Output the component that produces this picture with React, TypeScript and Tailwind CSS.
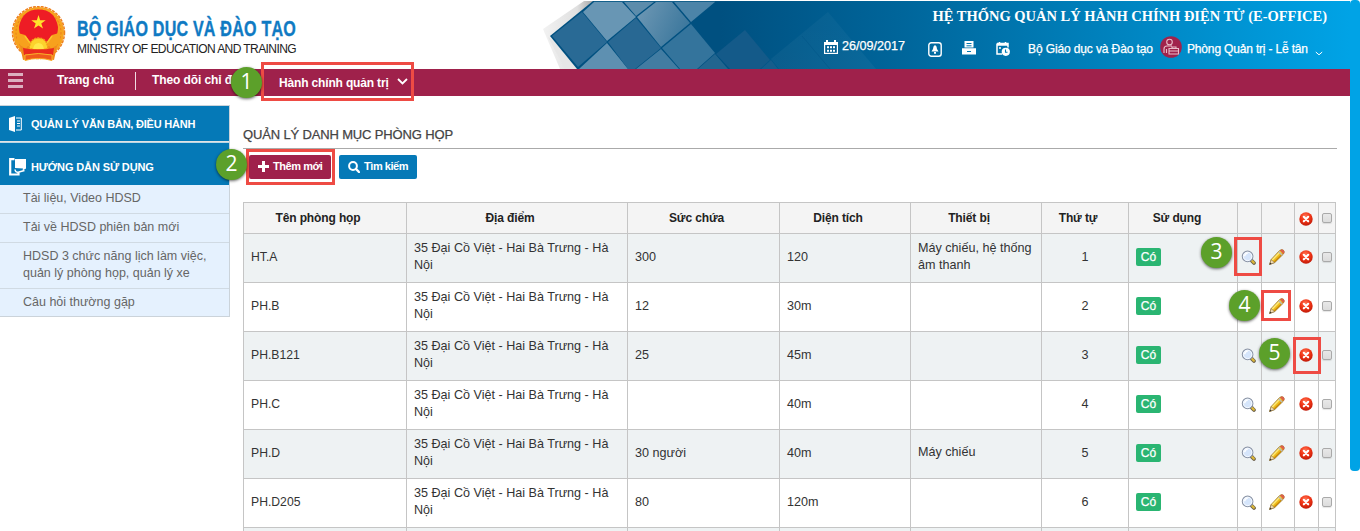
import React from "react";

const rows = [
  { name: "HT.A", cap: "300", area: "120", dev: "Máy chiếu, hệ thống âm thanh" },
  { name: "PH.B", cap: "12", area: "30m", dev: "" },
  { name: "PH.B121", cap: "25", area: "45m", dev: "" },
  { name: "PH.C", cap: "", area: "40m", dev: "" },
  { name: "PH.D", cap: "30 người", area: "40m", dev: "Máy chiếu" },
  { name: "PH.D205", cap: "80", area: "120m", dev: "" },
];

const gridCols = "grid grid-cols-[163px_221px_152px_131px_131px_87px_109px_24px_33px_24px_17px]";
const cell = "flex items-center border-r border-b border-[#c5c5c5]";

function Emblem() {
  return (
    <svg className="mt-[6px] h-[56px] w-[57px] shrink-0" viewBox="0 0 57 56">
      <circle cx="28.5" cy="26.500" r="25.500" fill="#f7a41d" />
      <circle cx="28.5" cy="26.500" r="26" fill="none" stroke="#ee7f1c" strokeWidth="1.500" strokeDasharray="3 1" />
      <circle cx="28.5" cy="26.500" r="22.500" fill="none" stroke="#ee7a1c" strokeWidth="1" strokeDasharray="2 2" />
      <path d="M10 40 L13 54 Q28 50 44 54 L47 40 Z" fill="#f08a1c" />
      <path d="M9 21 Q12 3.500 28.500 3.500 Q45 3.500 48 21 Q48 30 43 37 H14 Q9 30 9 21Z" fill="#ee1c25" />
      <path d="M28.5 9 l1.7 5.2h5.5l-4.4 3.2 1.7 5.2-4.5-3.2-4.5 3.2 1.7-5.2-4.4-3.2h5.5z" fill="#ffe32b" />
      <path d="M8 27 L15 29 L20 36 L16 43 L6 36Z M49 27 L42 29 L37 36 L41 43 L51 36Z" fill="#f7a11d" />
      <path d="M15 30 L20 37 M42 30 L37 37" stroke="#fbc62b" strokeWidth="1.500" />
      <path d="M19 43 Q20 32 28.500 32 Q37 32 38 43Z" fill="#fcd22c" stroke="#f39a1c" strokeWidth="1.500" strokeDasharray="2 1" />
      <path d="M23 43 Q24 37 28.500 37 Q33 37 34 43Z" fill="#ffe84a" />
      <path d="M13 42 Q28 45 44 42 L43 49 Q28 46 14 49Z" fill="#ea2a1f" />
      <path d="M15 49 Q28 46 42 49 V54.500 Q28 50.500 15 54.500Z" fill="#ef5a1b" stroke="#f8b02b" strokeWidth="1" />
    </svg>
  );
}

function Banner() {
  return (
    <svg className="absolute top-px left-[540px] h-[68px] w-[810px]" viewBox="540 1 810 68">
      <defs>
        <linearGradient id="base" gradientUnits="userSpaceOnUse" x1="720" y1="0" x2="1350" y2="0">
          <stop offset="0" stopColor="#005080" />
          <stop offset=".28" stopColor="#00659a" />
          <stop offset="1" stopColor="#00a3e6" />
        </linearGradient>
        <linearGradient id="shade" x1="0" y1="0" x2="1" y2="0">
          <stop offset="0" stopColor="#f2f2f2" />
          <stop offset=".6" stopColor="#e0e0e0" />
          <stop offset="1" stopColor="#8c8c8c" />
        </linearGradient>
        <linearGradient id="tile" x1="0" y1="0" x2="1" y2="0.4">
          <stop offset="0" stopColor="#7099b5" />
          <stop offset="1" stopColor="#3d789d" />
        </linearGradient>
        <linearGradient id="faint" x1="0" y1="0" x2="0" y2="1">
          <stop offset="0" stopColor="#fff" stopOpacity=".03" />
          <stop offset="1" stopColor="#fff" stopOpacity=".04" />
        </linearGradient>
      </defs>
      <path d="M543 29 L584 1 H600 L565 69 H560 Z" fill="url(#shade)" />
      <path d="M565 69 L548 37 L590 69Z" fill="#e6e6e6" />
      <path d="M550 36 L593 1 H1350 V69 H577 Z" fill="url(#base)" />
      <path d="M552 36 L582 12 L607 42 L578 67Z" fill="#296a95" />
      <path d="M583 12 L594 2 H622 L636 17 L607 41Z" fill="#6896b4" />
      <path d="M607 43 L628 69 H579Z" fill="#5e90b1" />
      <path d="M636 18 L661 48 L635 69 H628 L608 42Z" fill="#286893" />
      <path d="M624 2 H654 L636 16Z" fill="#5c8cab" />
      <path d="M656 2 H672 L690 23 L661 47 L637 17Z" fill="url(#tile)" />
      <path d="M674 2 H715 L691 22Z" fill="#4c84a8" />
      <path d="M691 24 L715 53 L697 69 H680 L662 48Z" fill="#34749c" />
      <path d="M661 49 L679 69 H636Z" fill="#427ca2" />
      <path d="M715 54 L728 69 H698Z" fill="#22658f" />
      <path d="M745 30 L770 60 L760 69 H730 L716 54Z" fill="#145a89" />
      <path d="M771 60 L778 69 H761Z" fill="#155d8c" />
      <path d="M828 12 L876 69 H779 L771 59Z" fill="url(#faint)" />
      <path d="M802 36 L830 69" stroke="#005384" strokeWidth="1" opacity=".4" />
      <path d="M594 1.5 H715" stroke="#14608b" strokeWidth="1" />
    </svg>
  );
}

function Magnifier() {
  return (
    <svg className="size-4 shrink-0" viewBox="0 0 16 16">
      <path d="M10.500 10.500 L13 13" stroke="#6b5f4a" strokeWidth="3.8" strokeLinecap="round" />
      <path d="M11.200 11 L12.800 12.600" stroke="#dcb838" strokeWidth="2.2" strokeLinecap="round" />
      <circle cx="6.6" cy="6.4" r="5.3" fill="#d5e5fb" stroke="#8b94a5" strokeWidth="1.1" />
      <circle cx="6.6" cy="6.4" r="4.200" fill="none" stroke="#f6faff" strokeWidth="1" />
      <path d="M3.7 6.200a3 3 0 0 1 3-3" stroke="#fff" strokeWidth="1.4" fill="none" />
    </svg>
  );
}

function Pencil() {
  return (
    <svg className="size-4 shrink-0" viewBox="0 0 16 16">
      <path d="M.6 15.5 L2.2 10.5 L10.7 1.5 Q12.5 0 14.4 1.2 Q15.8 2.8 14.6 4.8 L5.8 13.5Z" fill="#f0bd1d" stroke="#8b6618" strokeWidth=".8" />
      <path d="M3.2 11 L11.2 2.8" stroke="#fce97b" strokeWidth="1.5" />
      <path d="M5.3 12.9 L13.8 4.6" stroke="#c98a0b" strokeWidth="1.2" />
      <path d="M.6 15.5 L2.2 10.8 L5.5 13.5Z" fill="#f3dfb8" stroke="#8f7750" strokeWidth=".6" />
      <path d="M.5 15.6 L1.2 13.5 L2.7 14.7Z" fill="#333" />
      <path d="M10.2 2.2 L13.8 5.8 L12.8 6.7 L9.3 3.2Z" fill="#b7bbc1" />
      <path d="M11 1.5 Q13 -.2 14.8 1.4 Q16.2 3.3 14.4 5.1Z" fill="#dc604b" />
    </svg>
  );
}

function Delete() {
  return (
    <svg className="size-[14px] shrink-0" viewBox="0 0 14 14">
      <defs>
        <radialGradient id="red" cx=".45" cy=".3" r=".75">
          <stop offset="0" stopColor="#ff7656" />
          <stop offset=".5" stopColor="#f03314" />
          <stop offset="1" stopColor="#b91808" />
        </radialGradient>
      </defs>
      <circle cx="7" cy="7" r="6.7" fill="url(#red)" />
      <path d="M4.8 4.8 L9.2 9.3 M9.2 4.8 L4.8 9.3" stroke="#fff" strokeWidth="2.1" strokeLinecap="round" />
    </svg>
  );
}

function Box() {
  return <span className="block size-[10px] rounded-[2px] border border-[#a9a9a9] bg-linear-to-b from-[#e8e8e8] to-[#dcdcdc] shadow-[0_1px_1px_rgba(0,0,0,0.1)]" />;
}

function Step({ n, at }: { n: number; at: string }) {
  return (
    <div className={`absolute flex size-[31px] items-center justify-center rounded-full bg-[#5ca02a] pb-[3px] font-['Open_Sans','Noto_Sans',sans-serif] text-[21px] leading-none text-white shadow-[0_1px_3px_rgba(0,0,0,0.6)] ${at}`}>
      {n}
    </div>
  );
}

function HeaderInfo() {
  return (
    <div className="relative ml-auto h-[69px] w-[530px] text-[12px] font-normal text-white">
      <div className="flex h-[32px] items-center justify-end pt-[2px] pr-[3px] font-['Liberation_Serif',serif] text-[14.470px] font-bold whitespace-nowrap">
        HỆ THỐNG QUẢN LÝ HÀNH CHÍNH ĐIỆN TỬ (E-OFFICE)
      </div>
      <div className="flex h-[30px] items-center whitespace-nowrap [-webkit-text-stroke:0.25px_white]">
        <svg className="ml-[24px] h-[14px] w-[14px]" viewBox="0 0 14 14">
          <path d="M0 2h2V0h2v2h6V0h2v2h2v12H0z" fill="#fff" />
          <path d="M1.2 5h11.6v7.8H1.2z" fill="#005d91" />
          <path d="M3 6.3h2v2H3zM6 6.3h2v2H6zM9 6.3h2v2H9zM3 9.7h2v2H3zM6 9.7h2v2H6zM9 9.7h2v2H9z" fill="#fff" />
        </svg>
        <span className="ml-[4px] pb-px text-[12.6px]">26/09/2017</span>
        <svg className="mt-[4px] ml-[23px] h-[15px] w-[14px]" viewBox="0 0 14 15">
          <rect x=".8" y=".8" width="12.4" height="13.4" rx="2.5" fill="none" stroke="#fff" strokeWidth="1.4" />
          <path d="M7 3 Q9 4 9 7 L10.5 9.5 H3.5 L5 7 Q5 4 7 3zM6 10h2v1.7H6z" fill="#fff" />
        </svg>
        <svg className="mt-[2px] ml-[20px] h-[14px] w-[14px]" viewBox="0 0 14 14">
          <path d="M2.500 0h9v6.500h-9zM0 7.300h14V13.500H0z" fill="#fff" />
          <path d="M4.500 2.500h5M4.500 4.800h5" stroke="#0076ae" strokeWidth="1" />
          <path d="M5 10h4v1H5z" fill="#0076ae" />
        </svg>
        <svg className="mt-[4px] ml-[20px] h-[14px] w-[14px]" viewBox="0 0 14 14">
          <path d="M1 1.500h11v4M1 1.500V12h5M1 3h11M3.500 0v3M9.500 0v3M3 6h2" stroke="#fff" strokeWidth="1.5" fill="none" />
          <circle cx="9.800" cy="9.800" r="4.100" fill="#fff" />
          <path d="M9.500 7.500v2.700h2" stroke="#007db8" strokeWidth="1.1" fill="none" />
        </svg>
        <span className="mt-[4px] ml-[18px] w-[125px] tracking-[-0.120px]">Bộ Giáo dục và Đào tạo</span>
        <svg className="ml-[7px] size-[22px]" viewBox="0 0 22 22">
          <circle cx="11" cy="11" r="10.800" fill="#a0224c" />
          <circle cx="9.500" cy="6" r="2.800" fill="none" stroke="#e9bdca" strokeWidth="1.100" />
          <path d="M4 17v-4q0-3 3-3h5M6.500 17v-4M9 12.500h9.500V18H9zM12 12.500V11h4v1.500M9 15h9" fill="none" stroke="#e9bdca" strokeWidth="1.100" />
        </svg>
        <span className="mt-[4px] ml-[5px] w-[121px] tracking-[-0.170px]">Phòng Quản trị - Lễ tân</span>
        <svg className="mt-[12px] ml-[7px] h-[5px] w-[8px]" viewBox="0 0 8 5"><path d="M.8 1 L4 3.800 L7.200 1" fill="none" stroke="#fff" /></svg>
      </div>
    </div>
  );
}

export default function App() {
  return (
    <div className="relative flex h-[531px] w-[1360px] overflow-hidden bg-white font-['Liberation_Sans',Arial,sans-serif] text-[12px] text-[#333]">
      <div className="flex w-[1350px] flex-col">
        <header className="relative flex h-[69px] shrink-0">
          <Banner />
          <div className="flex pl-[10px]">
            <Emblem />
            <div className="ml-[10px] flex flex-col whitespace-nowrap">
              <span className="mt-[17px] origin-left scale-x-[0.73] text-[22px] leading-[24px] font-bold tracking-[0.3px] text-[#0f7ac3] [-webkit-text-stroke:0.4px_#0f7ac3]">BỘ GIÁO DỤC VÀ ĐÀO TẠO</span>
              <span className="pt-px text-[12px] leading-[15px] tracking-[-0.570px] text-[#222]">MINISTRY OF EDUCATION AND TRAINING</span>
            </div>
          </div>
          <div className="absolute top-0 right-[20px]"><HeaderInfo /></div>
        </header>

        <nav className="flex h-[27px] shrink-0 items-start bg-[#9f214b] text-[12px] font-bold text-white">
          <div className="mt-[4px] ml-[8px] flex h-[15px] w-[15px] flex-col justify-between">
            <i className="h-[3px] bg-[#dcb0c0]" /><i className="h-[3px] bg-[#dcb0c0]" /><i className="h-[3px] bg-[#dcb0c0]" />
          </div>
          <span className="mt-[3px] ml-[34px] w-[78px] leading-[16px]">Trang chủ</span>
          <span className="mt-[3px] h-[18px] w-px bg-[#f0dbe2]" />
          <span className="mt-[3px] ml-[16px] leading-[16px] tracking-[-0.100px]">Theo dõi chỉ đ</span>
        </nav>

        <div className="flex">
          <aside className="mt-[9px] h-[212px] w-[230px] shrink-0 border-t border-r border-b border-[#cbd3da] bg-[#e5f1fe] text-[12.500px] text-[#666]">
            <div className="flex h-[35px] items-center bg-[#0579b7] text-[11px] font-bold tracking-[-0.220px] whitespace-nowrap text-white">
              <svg className="ml-[9px] h-[16px] w-[13px]" viewBox="0 0 13 16">
                <path d="M0 2 L6 0 V16 L0 14Z" fill="#fff" />
                <path d="M7 2h5.300v12H7M8 5h3M8 7.500h3M8 10h3" fill="none" stroke="#fff" strokeWidth="1" />
              </svg>
              <span className="ml-[9px] pt-px">QUẢN LÝ VĂN BẢN, ĐIỀU HÀNH</span>
            </div>
            <div className="h-[2px] border-t border-[#e3e3e3] bg-[#b9d6e6]" />
            <div className="flex h-[42px] items-center bg-[#0579b7] pt-[6px] text-[11px] font-bold tracking-[-0.120px] whitespace-nowrap text-white">
              <svg className="ml-[9px] h-[18px] w-[17px]" viewBox="0 0 17 18">
                <path d="M5.500 1.200H1.200V16.500H9.500V14.500" fill="none" stroke="#fff" strokeWidth="2.200" />
                <path d="M6 1H17V10.500L13.500 12.500 14 10.500 6 10z" fill="#fff" />
                <path d="M6 11.500 Q6.500 15 10 14 L15.500 12.500" fill="none" stroke="#fff" strokeWidth="1.600" />
              </svg>
              <span className="ml-[5px]">HƯỚNG DẪN SỬ DỤNG</span>
            </div>
            <div className="h-[29px] border-b border-[#d0dae3] pt-[5px] pl-[23px] leading-[17px]">Tài liệu, Video HDSD</div>
            <div className="h-[29px] border-b border-[#d0dae3] pt-[5px] pl-[23px] leading-[17px]">Tải về HDSD phiên bản mới</div>
            <div className="h-[46px] border-b border-[#d0dae3] pt-[5px] pl-[23px] leading-[17px]">HDSD 3 chức năng lịch làm việc,<br />quản lý phòng họp, quản lý xe</div>
            <div className="h-[27px] pt-[5px] pl-[23px] leading-[17px]">Câu hỏi thường gặp</div>
          </aside>

          <main className="ml-[13px] w-[1094px]">
            <h1 className="mt-[27px] h-[26px] border-b border-[#aaa] pt-[3px] text-[13px] leading-[18px] tracking-[-0.150px] text-[#444] [-webkit-text-stroke:0.25px_#444]">QUẢN LÝ DANH MỤC PHÒNG HỌP</h1>
            <div className="mt-[6px] flex h-[24px] pl-[6px] text-[11px] font-bold tracking-[-0.450px] whitespace-nowrap text-white">
              <button className="flex h-[24px] w-[82px] items-center rounded-[2px] bg-[#9f214b] pb-[2px] pl-[9px]">
                <svg className="size-[11px]" viewBox="0 0 11 11"><path d="M5.500 0V11M0 5.500H11" stroke="#fff" strokeWidth="3" /></svg>
                <span className="ml-[4px]">Thêm mới</span>
              </button>
              <button className="ml-[8px] flex h-[24px] w-[78px] items-center rounded-[2px] bg-[#0579b7] pb-[2px] pl-[9px]">
                <svg className="mt-[2px] size-[12px]" viewBox="0 0 12 12"><circle cx="5" cy="5" r="3.900" fill="none" stroke="#fff" strokeWidth="2" /><path d="M8 8 L11 11" stroke="#fff" strokeWidth="2.400" strokeLinecap="round" /></svg>
                <span className="ml-[4px]">Tìm kiếm</span>
              </button>
            </div>

            <div className="mt-[23px] w-[1093px] border-t border-l border-[#c5c5c5]">
              <div className={`${gridCols} h-[31px] bg-[#f4f4f4] font-bold tracking-[-0.120px] text-[#222]`}>
                {["Tên phòng họp", "Địa điểm", "Sức chứa", "Diện tích", "Thiết bị", "Thứ tự"].map((h) => (
                  <div key={h} className={`${cell} justify-center pr-[14px]`}>{h}</div>
                ))}
                <div className={`${cell} justify-center pr-[12px]`}>Sử dụng</div>
                <div className={cell} />
                <div className={cell} />
                <div className={`${cell} justify-center pt-[2px] pr-px`}><Delete /></div>
                <div className={`${cell} justify-center`}><Box /></div>
              </div>
              {rows.map((r, i) => (
                <div key={r.name} className={`${gridCols} h-[49px] text-[12.600px] leading-[17px] ${i % 2 ? "bg-white" : "bg-[#eef2f3]"}`}>
                  <div className={`${cell} pb-[2px] pl-[7px] text-[12.200px]`}>{r.name}</div>
                  <div className={`${cell} pr-[7px] pb-[3px] pl-[7px]`}>35 Đại Cồ Việt - Hai Bà Trưng - Hà Nội</div>
                  <div className={`${cell} pb-[2px] pl-[7px]`}>{r.cap}</div>
                  <div className={`${cell} pb-[2px] pl-[7px]`}>{r.area}</div>
                  <div className={`${cell} pr-[4px] pb-[3px] pl-[7px]`}>{r.dev}</div>
                  <div className={`${cell} justify-center pb-[2px]`}>{i + 1}</div>
                  <div className={`${cell} pb-[2px] pl-[7px]`}>
                    <span className="flex h-[18px] w-[25px] items-center justify-center rounded-[2px] bg-[#2ab572] text-[12px] text-white [-webkit-text-stroke:0.25px_white]">Có</span>
                  </div>
                  <div className={`${cell} justify-center pr-px pb-px`}><Magnifier /></div>
                  <div className={`${cell} justify-center pr-[3px] pb-[2px]`}><Pencil /></div>
                  <div className={`${cell} justify-center pr-[2px] pb-[2px]`}><Delete /></div>
                  <div className={`${cell} justify-center pb-[2px]`}><Box /></div>
                </div>
              ))}
              <div className={`${gridCols} h-[10px] bg-[#eef2f3]`}>
                {Array.from({ length: 11 }, (_, i) => <div key={i} className={cell} />)}
              </div>
            </div>
          </main>
        </div>
      </div>

      <div className="h-[471px] w-[10px] rounded-[4px] bg-[#00a3e6]" />

      <div className="absolute top-[62px] left-[261px] flex h-[39px] w-[153px] items-center border-[3px] border-[#ee4b44] pt-[2px] pl-[15px] text-[12px] font-bold tracking-[-0.160px] whitespace-nowrap text-white">
        Hành chính quản trị
        <svg className="mb-[2px] ml-[8px] h-[7px] w-[11px] shrink-0" viewBox="0 0 11 7"><path d="M1 1 L5.500 5.500 L10 1" fill="none" stroke="#fff" strokeWidth="1.800" /></svg>
      </div>
      <div className="absolute top-[149px] left-[246px] h-[36px] w-[89px] border-[3px] border-[#ee4b44]" />
      <div className="absolute top-[237px] left-[1234px] h-[39px] w-[28px] border-[3px] border-[#ee4b44]" />
      <div className="absolute top-[290px] left-[1261px] h-[31px] w-[30px] border-[3px] border-[#ee4b44]" />
      <div className="absolute top-[337px] left-[1293px] h-[37px] w-[28px] border-[3px] border-[#ee4b44]" />
      <Step n={1} at="top-[67px] left-[231px]" />
      <Step n={2} at="top-[149px] left-[216px]" />
      <Step n={3} at="top-[237px] left-[1201px]" />
      <Step n={4} at="top-[290px] left-[1229px]" />
      <Step n={5} at="top-[338px] left-[1259px]" />
    </div>
  );
}
